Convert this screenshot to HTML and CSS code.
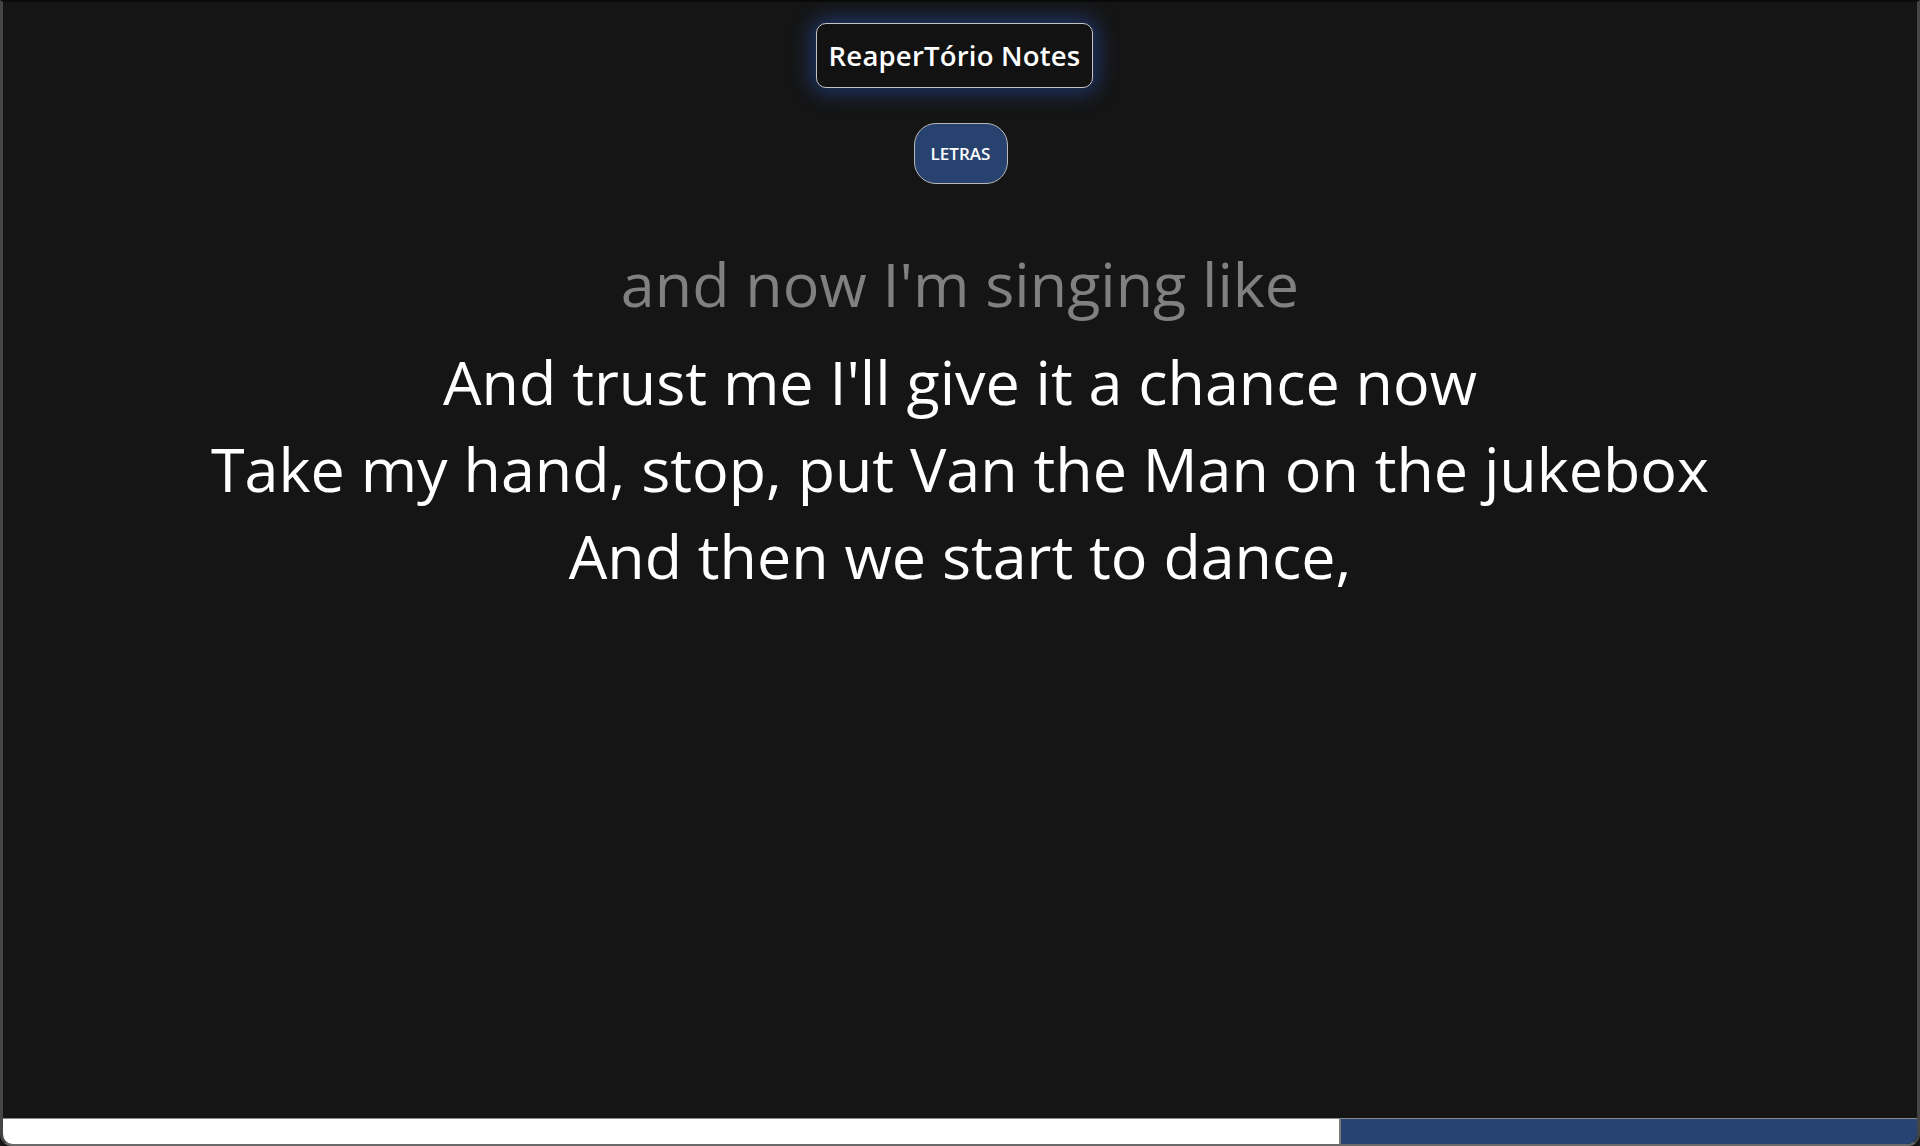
FILE: index.html
```html
<!DOCTYPE html>
<html lang="pt">
<head>
<meta charset="utf-8">
<title>ReaperTório Notes</title>
<link rel="stylesheet" href="styles.css">
</head>
<body>
<div class="app">
  <main class="main">
    <header class="title">ReaperTório Notes</header>
    <nav class="nav">
      <button class="tab">LETRAS</button>
    </nav>
    <section class="lyrics">
      <p class="line prev">and now I'm singing like</p>
      <p class="line">And trust me I'll give it a chance now</p>
      <p class="line">Take my hand, stop, put Van the Man on the jukebox</p>
      <p class="line">And then we start to dance,</p>
    </section>
  </main>
  <footer class="bar">
    <div class="bar-left"></div>
    <div class="bar-right"></div>
  </footer>
</div>
</body>
</html>
```
FILE: styles.css
```css
html, body {
  margin: 0;
  padding: 0;
  height: 100%;
  background: #151515;
}
body {
  font-family: "Open Sans", "Noto Sans", sans-serif;
  color: #fff;
}
.app {
  box-sizing: border-box;
  height: 100vh;
  display: flex;
  flex-direction: column;
  border-top: 2px solid #0a0a0a;
  border-left: 3px solid #454545;
  border-right: 3px solid #454545;
  border-bottom: 2px solid #6a6a6a;
  border-radius: 0 0 12px 12px;
  overflow: hidden;
}
.main {
  flex: 1;
  display: flex;
  flex-direction: column;
  align-items: center;
  padding-top: 21px;
}
.title {
  box-sizing: border-box;
  height: 65px;
  padding: 0 12px;
  display: flex;
  align-items: center;
  font-size: 27.5px;
  font-weight: 600;
  letter-spacing: 0.2px;
  border: 1.5px solid #c4c4c4;
  border-radius: 10px;
  background: #121212;
  box-shadow: 0 0 20px 5px rgba(38, 78, 170, 0.55);
  margin-left: -11px;
}
.nav {
  margin-top: 35px;
  display: flex;
  justify-content: center;
}
.tab {
  box-sizing: border-box;
  width: 94px;
  height: 61px;
  border: 1.5px solid #b8b8b8;
  border-radius: 22px;
  background: #28426f;
  color: #fff;
  font-family: "Open Sans", "Noto Sans", sans-serif;
  font-size: 17px;
  font-weight: 600;
  padding: 0;
  margin-left: 1px;
}
.lyrics {
  margin-top: 56px;
  display: flex;
  flex-direction: column;
  align-items: center;
  text-align: center;
}
.line {
  margin: 0;
  font-size: 61px;
  line-height: 87px;
  font-weight: 500;
  color: #fff;
  white-space: nowrap;
}
.line.prev {
  color: #808080;
  margin-bottom: 11px;
}
.bar {
  height: 25px;
  display: flex;
  border-top: 1.5px solid #8a8a8a;
}
.bar-left {
  width: 1336px;
  background: #fff;
}
.bar-right {
  flex: 1;
  background: #274371;
  border-left: 2px solid #7a7a7a;
}
```
